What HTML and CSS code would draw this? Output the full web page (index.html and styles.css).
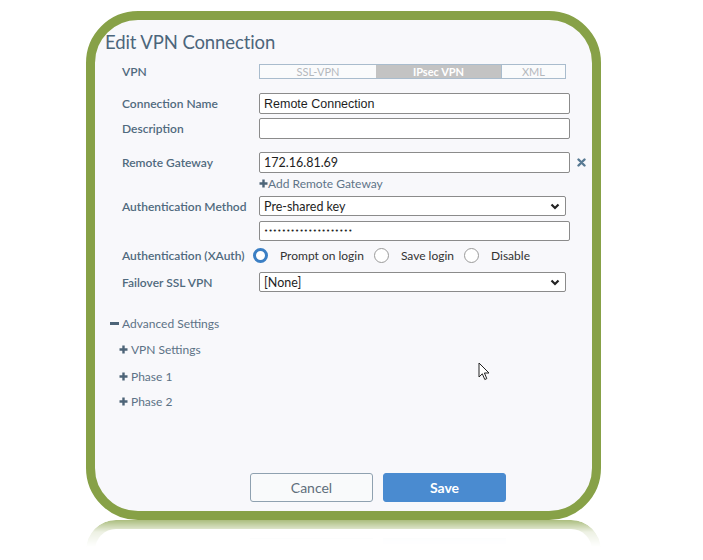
FILE: index.html
```html
<!DOCTYPE html>
<html>
<head>
<meta charset="utf-8">
<link rel="stylesheet" href="styles.css">
</head>
<body>
<div class="stage">
  <div class="frame">
    <h1 class="title">Edit VPN Connection</h1>
    <div class="form">
      <div class="row r-vpn">
        <div class="label">VPN</div>
        <div class="seg">
          <div class="seg-item seg-ssl">SSL-VPN</div>
          <div class="seg-item seg-ipsec">IPsec VPN</div>
          <div class="seg-item seg-xml">XML</div>
        </div>
      </div>
      <div class="row r-name">
        <div class="label">Connection Name</div>
        <div class="input"><span class="val arial">Remote Connection</span></div>
      </div>
      <div class="row r-desc">
        <div class="label">Description</div>
        <div class="input"></div>
      </div>
      <div class="row r-gw">
        <div class="label">Remote Gateway</div>
        <div class="input"><span class="val">172.16.81.69</span></div>
        <svg class="remove" width="9" height="9" viewBox="0 0 9 9"><path d="M1.5 1.5 L7.5 7.5 M7.5 1.5 L1.5 7.5" stroke="#587a93" stroke-width="2.4" stroke-linecap="round"/></svg>
      </div>
      <div class="row r-add">
        <div class="label"></div>
        <div class="add"><svg class="plus" width="9" height="9" viewBox="0 0 9 9"><path d="M4.5 0.5 V8.5 M0.5 4.5 H8.5" stroke="#4d6478" stroke-width="2.4"/></svg>Add Remote Gateway</div>
      </div>
      <div class="row r-auth">
        <div class="label">Authentication Method</div>
        <div class="select"><span class="val">Pre-shared key</span><svg class="chev" width="10" height="7" viewBox="0 0 10 7"><path d="M1.5 1.5 L5 5 L8.5 1.5" fill="none" stroke="#222" stroke-width="2.2"/></svg></div>
      </div>
      <div class="row r-pass">
        <div class="label"></div>
        <div class="input pass"><span class="dots">••••••••••••••••••••</span></div>
      </div>
      <div class="row r-xauth">
        <div class="label">Authentication (XAuth)</div>
        <div class="radios">
          <span class="radio on"></span><span class="rtext">Prompt on login</span>
          <span class="radio"></span><span class="rtext">Save login</span>
          <span class="radio"></span><span class="rtext">Disable</span>
        </div>
      </div>
      <div class="row r-fail">
        <div class="label">Failover SSL VPN</div>
        <div class="select"><span class="val">[None]</span><svg class="chev" width="10" height="7" viewBox="0 0 10 7"><path d="M1.5 1.5 L5 5 L8.5 1.5" fill="none" stroke="#222" stroke-width="2.2"/></svg></div>
      </div>
    </div>
    <div class="tree">
      <div class="node n-adv"><span class="minus"></span>Advanced Settings</div>
      <div class="node sub n-vpn"><svg class="pl" width="9" height="9" viewBox="0 0 9 9"><path d="M4.5 0.5 V8.5 M0.5 4.5 H8.5" stroke="#4d6478" stroke-width="2.4"/></svg>VPN Settings</div>
      <div class="node sub n-p1"><svg class="pl" width="9" height="9" viewBox="0 0 9 9"><path d="M4.5 0.5 V8.5 M0.5 4.5 H8.5" stroke="#4d6478" stroke-width="2.4"/></svg>Phase 1</div>
      <div class="node sub n-p2"><svg class="pl" width="9" height="9" viewBox="0 0 9 9"><path d="M4.5 0.5 V8.5 M0.5 4.5 H8.5" stroke="#4d6478" stroke-width="2.4"/></svg>Phase 2</div>
    </div>
    <div class="buttons">
      <button class="btn cancel">Cancel</button>
      <button class="btn save">Save</button>
    </div>
    <svg class="cursor" width="13" height="19" viewBox="0 0 13 19"><path d="M1 1 L1 15 L4.3 11.8 L6.8 17.5 L8.8 16.6 L6.4 11 L11 11 Z" fill="#fff" stroke="#222" stroke-width="1" stroke-linejoin="round"/></svg>
  </div>
  <div class="reflection">
    <div class="ref-btns"><span class="rb rb-c"></span><span class="rb rb-s"></span></div>
  </div>
</div>
</body>
</html>
```
FILE: styles.css
```css
* { box-sizing: border-box; }
html, body { margin: 0; padding: 0; background: #fff; }
body { font-family: Lato, "Open Sans", sans-serif; width: 703px; height: 560px; overflow: hidden; }
.stage { padding: 11px 0 0 86px; }
.frame {
  position: relative;
  width: 515px;
  height: 509px;
  border: 9px solid #87a147;
  border-radius: 52px;
  background: #f8f8fb;
  display: flex;
  flex-direction: column;
  padding: 11px 0 9px 0;
}
.title {
  margin: 0 0 0 10px;
  font-size: 18.5px;
  line-height: 22px;
  font-weight: 400;
  color: #4c667b;
  letter-spacing: -0.1px;
}
.form { padding-left: 27px; }
.row { display: flex; align-items: center; }
.label {
  width: 137px;
  flex: none;
  font-size: 12px;
  font-weight: 600;
  color: #506a7e;
  white-space: nowrap;
}
.r-vpn { margin-top: 11px; height: 15px; }
.r-name { margin-top: 14px; }
.r-desc { margin-top: 4px; }
.r-gw { margin-top: 13px; }
.r-add { margin-top: 3px; height: 14px; }
.r-auth { margin-top: 6px; }
.r-pass { margin-top: 5px; }
.r-xauth { margin-top: 6px; height: 16px; }
.r-fail { margin-top: 9px; }

.seg {
  display: flex;
  width: 307px;
  height: 15px;
  border: 1px solid #a9bccd;
  background: #fafbfc;
  font-size: 11px;
  line-height: 13px;
  color: #b4b8bc;
}
.seg-item { text-align: center; }
.seg-ssl { width: 116px; }
.seg-ipsec { width: 125px; background: #c3c3c3; color: #fff; font-weight: 700; }
.seg-xml { flex: 1; border-left: 1px solid #a9bccd; }

.input {
  width: 311px;
  height: 21px;
  border: 1px solid #8b8b8b;
  border-radius: 2px;
  background: #fff;
  display: flex;
  align-items: center;
  padding-left: 4px;
}
.pass { height: 20px; }
.val { font-size: 12.5px; color: #1e1e1e; }
.arial { font-family: "Liberation Sans", Arial, sans-serif; font-size: 12.5px; }
.dots { font-family: "DejaVu Sans", sans-serif; font-size: 7px; letter-spacing: 0.3px; color: #222; }
.remove { margin-left: 7px; }

.add { font-size: 12px; color: #5e7488; display: flex; align-items: center; }
.plus { margin-right: 0; }

.select {
  width: 307px;
  height: 20px;
  border: 1px solid #8b8b8b;
  border-radius: 2px;
  background: #fff;
  display: flex;
  align-items: center;
  justify-content: space-between;
  padding: 0 4px 0 4px;
}
.chev { margin-right: 1px; }

.radios { display: flex; align-items: center; font-size: 12px; color: #333; margin-left: -6px; }
.radio {
  width: 15px; height: 15px; border-radius: 50%;
  border: 1px solid #9a9a9a; background: #fff;
  margin-right: 12px;
}
.radio.on { border: 3.5px solid #3b7fc4; }
.rtext { margin-right: 10px; }

.tree { padding-left: 15px; margin-top: 23px; }
.node { height: 16px; display: flex; align-items: center; font-size: 12px; color: #5c7286; }
.minus { width: 9px; height: 3px; background: #4d6478; margin-right: 3px; }
.sub { padding-left: 9px; }
.pl { margin-right: 3px; }
.n-vpn { margin-top: 10px; }
.n-p1 { margin-top: 11px; }
.n-p2 { margin-top: 9px; }

.buttons { margin-top: auto; padding-left: 155px; display: flex; gap: 10px; }
.btn {
  width: 123px; height: 29px; border-radius: 3px;
  font-family: Lato, sans-serif; font-size: 14px; padding: 0;
}
.cancel { border: 1px solid #8fa1b0; background: #f9fafb; color: #5f6e7b; }
.save { border: 1px solid #4a8bd0; background: #4a8bd0; color: #fff; font-weight: 700; }

.cursor { position: absolute; left: 383px; top: 342px; }

.reflection {
  position: relative;
  width: 515px;
  height: 30px;
  border: 9px solid #87a147;
  border-bottom: none;
  border-radius: 52px 52px 0 0;
  background: #fff;
  -webkit-mask-image: linear-gradient(to bottom, rgba(0,0,0,0.7), rgba(0,0,0,0.15) 40%, rgba(0,0,0,0) 90%);
  mask-image: linear-gradient(to bottom, rgba(0,0,0,0.7), rgba(0,0,0,0.15) 40%, rgba(0,0,0,0) 90%);
}
.ref-btns { display: flex; gap: 10px; padding-left: 155px; padding-top: 9px; }
.rb { width: 123px; height: 6px; border-top: 1px solid #dde3ea; }
.rb-s { background: #e6eef8; }
```
